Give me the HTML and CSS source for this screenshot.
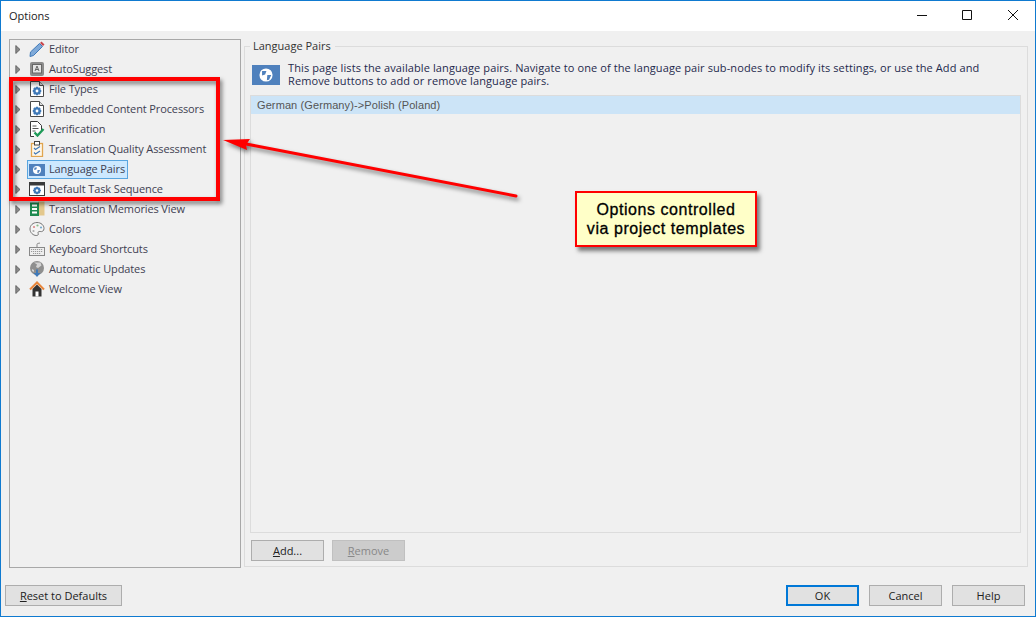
FILE: index.html
```html
<!DOCTYPE html>
<html lang="en">
<head>
<meta charset="utf-8">
<title>Options</title>
<link rel="stylesheet" href="styles.css">
</head>
<body>
<svg class="defs" width="0" height="0" aria-hidden="true">
  <defs>
    <symbol id="gear" viewBox="0 0 10 10">
      <path fill="#3f79b8" d="M4 0h2l.3 1.400 1.200-.6 1.700 1.700-.6 1.200L10 4v2l-1.400.3.600 1.200-1.700 1.700-1.200-.6L6 10H4l-.3-1.400-1.200.6L.8 7.500l.6-1.200L0 6V4l1.400-.3-.6-1.200L2.500.8l1.200.6z"/>
      <circle cx="5" cy="5" r="1.600" fill="#fff"/>
    </symbol>
    <symbol id="docgear" viewBox="0 0 16 16">
      <path d="M1.500.5h9l4 4v11h-13z" fill="#fff" stroke="#4a4a4a"/>
      <path d="M10.500.5v4h4" fill="#ddd" stroke="#4a4a4a"/>
      <use href="#gear" x="3.500" y="5.500" width="9" height="9"/>
    </symbol>
    <symbol id="arrow" viewBox="0 0 6 9">
      <path d="M.8.500 5 4.500.8 8.500z" fill="#8a8a8a" stroke="#555" stroke-width=".8"/>
    </symbol>
  </defs>
</svg>
<div class="window">
  <header class="titlebar">
    <span class="title">Options</span>
    <div class="controls">
      <svg class="ctl" viewBox="0 0 10 10"><path d="M0 5.500h10" stroke="#111" fill="none"/></svg>
      <svg class="ctl" viewBox="0 0 10 10"><path d="M.5.500h9v9h-9z" stroke="#111" fill="none"/></svg>
      <svg class="ctl close" viewBox="0 0 10 10"><path d="M0 0l10 10M10 0L0 10" stroke="#111" fill="none"/></svg>
    </div>
  </header>
  <main class="main">
    <nav class="tree">
      <div class="row"><svg class="exp"><use href="#arrow"/></svg><svg class="ico" viewBox="0 0 16 16"><path d="M1.500 11 10.500 2.500l3 3-9 9-3.500 1z" fill="#7fa9d8" stroke="#3f79b8"/><path d="M11 2l1.500-1.500 3 3L14 5z" fill="#c8434a"/></svg><span class="lbl">Editor</span></div>
      <div class="row"><svg class="exp"><use href="#arrow"/></svg><svg class="ico" viewBox="0 0 16 16"><rect x="1" y="1" width="14" height="14" rx="2" fill="#8c8c8c"/><rect x="3.500" y="3.500" width="9" height="8.500" fill="#e4e4e4" stroke="#666"/><path d="M6 10l2-5 2 5M6.800 8.500h2.400" stroke="#666" fill="none"/></svg><span class="lbl">AutoSuggest</span></div>
      <div class="row"><svg class="exp"><use href="#arrow"/></svg><svg class="ico"><use href="#docgear"/></svg><span class="lbl">File Types</span></div>
      <div class="row"><svg class="exp"><use href="#arrow"/></svg><svg class="ico"><use href="#docgear"/></svg><span class="lbl">Embedded Content Processors</span></div>
      <div class="row"><svg class="exp"><use href="#arrow"/></svg><svg class="ico" viewBox="0 0 16 16"><path d="M5 15.500H1.500V.5h7l4 4v5" fill="#fff" stroke="#3a3a3a"/><path d="M3.500 5h4M3.500 7.500h6M3.500 10h3" stroke="#555" fill="none"/><path d="M5.500 11.500l3 3 6-6.500" stroke="#1e9a58" stroke-width="2.400" fill="none"/></svg><span class="lbl">Verification</span></div>
      <div class="row"><svg class="exp"><use href="#arrow"/></svg><svg class="ico" viewBox="0 0 16 16"><rect x="2.500" y="2.500" width="11" height="13" fill="#fff7e8" stroke="#e0a550" stroke-width="1.300"/><rect x="5.500" y="0.500" width="5" height="3.500" fill="#fff" stroke="#444"/><path d="M5 7l1.500 1.500L11 5.500M5 11.500l1.500 1.500 4.500-3" stroke="#3f79b8" stroke-width="1.200" fill="none"/></svg><span class="lbl">Translation Quality Assessment</span></div>
      <div class="row"><svg class="exp"><use href="#arrow"/></svg><span class="hl"><svg class="ico" viewBox="0 0 16 16"><rect y="2" width="16" height="12" fill="#4f81bd"/><circle cx="8" cy="8" r="4" fill="#fff"/><path d="M5.500 5.500h2.500l-.8 2-2 .4zM8.500 8h2.500l-1.200 2.800-1.500.2z" fill="#4f81bd"/></svg><span class="lbl">Language Pairs</span></span></div>
      <div class="row"><svg class="exp"><use href="#arrow"/></svg><svg class="ico" viewBox="0 0 16 16"><rect x=".5" y="1.500" width="15" height="13" fill="#fff" stroke="#3a3a3a"/><rect x="1" y="2" width="14" height="2.500" fill="#3a3a3a"/><use href="#gear" x="4" y="5.500" width="8" height="8"/></svg><span class="lbl">Default Task Sequence</span></div>
      <div class="row"><svg class="exp"><use href="#arrow"/></svg><svg class="ico" viewBox="0 0 16 16"><rect x="9" y="0.500" width="6.500" height="14" fill="#e3c88d"/><rect x="1" y="1.500" width="9" height="13.500" fill="#1e8a50"/><path d="M3 4.500h5M3 8h5M3 11.500h5" stroke="#fff" stroke-width="1.800"/></svg><span class="lbl">Translation Memories View</span></div>
      <div class="row"><svg class="exp"><use href="#arrow"/></svg><svg class="ico" viewBox="0 0 16 16"><path d="M8 1.500c4 0 7 2.700 7 6 0 2.500-2 3.500-3.800 3-1.600-.4-2.700.7-2 2 .6 1.300-.5 2-2 2-3 0-6.200-2.800-6.200-6.500s3-6.500 7-6.500z" fill="#f4f4f4" stroke="#777"/><circle cx="5" cy="6" r="1.100" fill="#d88"/><circle cx="8.500" cy="4.500" r="1.100" fill="#8b8"/><circle cx="12" cy="6.500" r="1.100" fill="#7ac"/><circle cx="4.500" cy="10" r="1.100" fill="#aaa"/></svg><span class="lbl">Colors</span></div>
      <div class="row"><svg class="exp"><use href="#arrow"/></svg><svg class="ico" viewBox="0 0 16 16"><rect x=".5" y="6.500" width="15" height="8" fill="#eee" stroke="#888"/><path d="M2 8.500h12M2 10.500h12M4 12.500h8" stroke="#999" stroke-dasharray="1.200 .8"/><path d="M8 6V3.500c0-1.500 2-1 3-1.500" stroke="#888" fill="none"/></svg><span class="lbl">Keyboard Shortcuts</span></div>
      <div class="row"><svg class="exp"><use href="#arrow"/></svg><svg class="ico" viewBox="0 0 16 16"><circle cx="8" cy="7" r="7" fill="#8f8f8f"/><path d="M5 1.500l3 2-1 2.500 2 1 3.500-2.500-1-3z" fill="#d4d4d4"/><path d="M3 8l2 1v2l-2-1z" fill="#d4d4d4"/><path d="M7 8.500h2v3.500h2.500L8 16 4.500 12H7z" fill="#3f79b8"/></svg><span class="lbl">Automatic Updates</span></div>
      <div class="row"><svg class="exp"><use href="#arrow"/></svg><svg class="ico" viewBox="0 0 16 16"><path d="M3.500 8v7.500h9V8L8 3.500z" fill="#333"/><rect x="6.500" y="10.500" width="3" height="5" fill="#fff"/><path d="M1 8.500l7-7 7 7" stroke="#e8853a" stroke-width="2" fill="none"/></svg><span class="lbl">Welcome View</span></div>
    </nav>
    <section class="group">
      <h2 class="legend">Language Pairs</h2>
      <div class="info">
        <div class="info-ico"><svg class="globe" viewBox="0 0 16 16"><circle cx="8" cy="8" r="7.500" fill="#fff"/><path d="M3.500 3.500h5l-1.500 4-3.500 1zM9.500 8h4.500l-2.500 5.500-2.500.5z" fill="#4f81bd"/></svg></div>
        <p class="info-text">This page lists the available language pairs. Navigate to one of the language pair sub-nodes to modify its settings, or use the Add and Remove buttons to add or remove language pairs.</p>
      </div>
      <div class="list"><div class="item">German (Germany)-&gt;Polish (Poland)</div></div>
      <div class="list-btns">
        <button class="btn"><u>A</u>dd...</button>
        <button class="btn off"><u>R</u>emove</button>
      </div>
    </section>
  </main>
  <footer class="footer">
    <button class="btn reset"><u>R</u>eset to Defaults</button>
    <div class="actions">
      <button class="btn primary">OK</button>
      <button class="btn">Cancel</button>
      <button class="btn">Help</button>
    </div>
  </footer>
  <svg class="overlay" width="1036" height="617" viewBox="0 0 1036 617">
    <rect x="11" y="79" width="207" height="120" fill="none" stroke="#f00" stroke-width="4"/>
    <path d="M516 196 246 144" stroke="#f00" stroke-width="3" fill="none" stroke-linecap="round"/>
    <path d="M223 140 250 139 246 145 247 150z" fill="#f00"/>
  </svg>
  <div class="callout">Options controlled<br>via project templates</div>
</div>
</body>
</html>
```
FILE: styles.css
```css
* { box-sizing: border-box; }
html, body { margin: 0; padding: 0; }
body { width: 1036px; height: 617px; overflow: hidden; font-family: "Open Sans", "Noto Sans", sans-serif; font-size: 11px; color: #333; background: #f0f0f0; }
.defs { position: absolute; }
.window { position: relative; width: 1036px; height: 617px; border: 1px solid #0f7ad0; display: flex; flex-direction: column; background: #f0f0f0; }
.titlebar { height: 30px; flex: none; background: #fff; display: flex; align-items: center; justify-content: space-between; padding: 0 0 2px 8px; }
.title { font-size: 11px; color: #222; }
.controls { display: flex; gap: 35px; padding-right: 17px; }
.ctl { width: 10px; height: 10px; display: block; }
.ctl.close { margin-left: 1px; }
.main { flex: 1; min-height: 0; display: flex; padding: 8px 7px 0 8px; gap: 3px; }
.tree { width: 232px; height: 529px; background: #f0f0f0; border: 1px solid #a8a8a8; flex: none; }
.row { height: 20px; display: flex; align-items: center; padding-left: 5px; }
.row:first-child { margin-top: -1px; }
.exp { width: 6px; height: 9px; flex: none; margin-right: 8px; }
.ico { width: 16px; height: 16px; flex: none; margin-right: 4px; }
.lbl { color: #3f3f52; white-space: nowrap; letter-spacing: -.12px; margin-top: -2px; }
.hl { display: flex; align-items: center; align-self: flex-end; height: 19px; margin-left: -2px; padding: 0 2px 0 1px; width: 101px; background: #cce8ff; border: 1px solid #58a5e0; }
.group { flex: 1; height: 521px; margin-top: 7px; margin-bottom: 1px; border: 1px solid #dcdcdc; padding: 0 6px 0 5px; display: flex; flex-direction: column; }
.legend { align-self: flex-start; margin: -9px 0 0 0; padding: 0 4px 0 3px; height: 15px; line-height: 15px; font-size: 11px; font-weight: 400; color: #333; background: #f0f0f0; }
.info { display: flex; margin-top: 7px; height: 35px; padding-left: 2px; }
.info-ico { width: 28px; height: 20px; margin-top: 5px; background: #4f81bd; display: flex; align-items: center; justify-content: center; flex: none; }
.globe { width: 14px; height: 14px; }
.info-text { margin: 1px 0 0 8px; width: 710px; font-size: 11px; line-height: 13px; letter-spacing: .1px; color: #1f2a4d; }
.list { height: 438px; border: 1px solid #dcdcdc; }
.item { height: 18px; line-height: 18px; background: #cce4f7; padding-left: 6px; color: #555; font-family: "Liberation Sans", sans-serif; font-size: 11px; letter-spacing: .1px; }
.list-btns { display: flex; gap: 8px; margin-top: 7px; padding-left: 1px; }
.btn { width: 73px; height: 21px; padding: 0; border: 1px solid #adadad; background: #e1e1e1; font: inherit; color: #222; }
.btn.off { background: #ccc; border-color: #c0c0c0; color: #888; }
.btn.primary { border: 2px solid #0078d7; }
.footer { flex: none; display: flex; justify-content: space-between; padding: 0 10px 10px 4px; margin-top: 17px; }
.reset { width: 117px; }
.actions { display: flex; gap: 10px; }
.overlay { position: absolute; left: -1px; top: -1px; filter: drop-shadow(2px 3px 2px rgba(0, 0, 0, .5)); pointer-events: none; }
.callout { position: absolute; left: 574px; top: 190px; width: 182px; height: 56px; background: #ffffc8; border: 2px solid #f00; box-shadow: 3px 4px 4px rgba(0, 0, 0, .5); display: flex; align-items: center; justify-content: center; text-align: center; font-family: "Liberation Sans", sans-serif; font-size: 16px; line-height: 19px; letter-spacing: .55px; color: #000; -webkit-text-stroke: .3px #000; }
```
